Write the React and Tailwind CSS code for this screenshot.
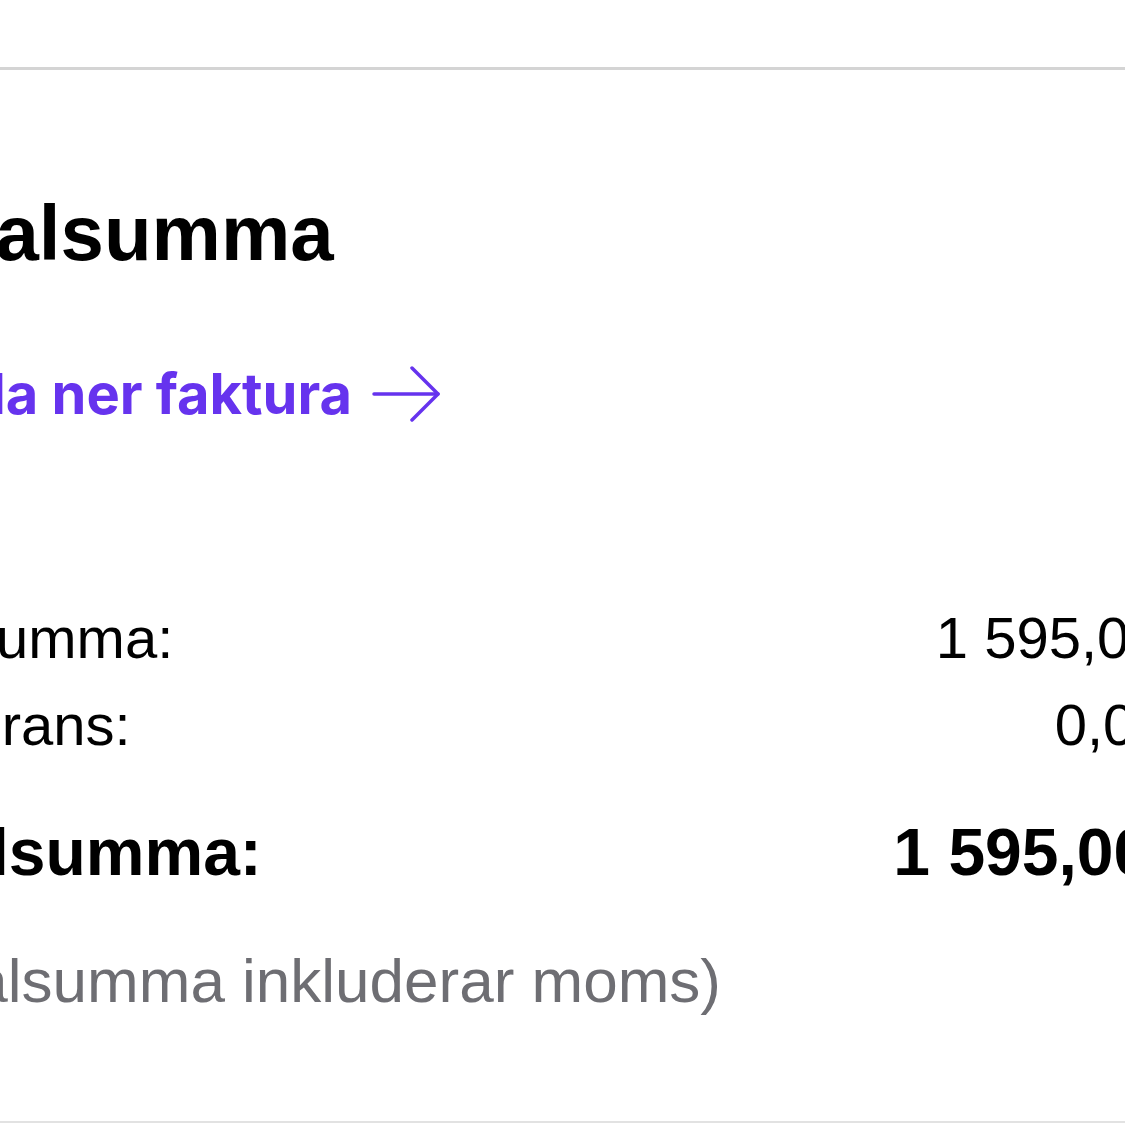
export default function App() {
  return (
    <div className="w-[1125px] h-[1125px] overflow-hidden bg-white" style={{ fontFamily: '"Liberation Sans", Arial, sans-serif' }}>
      <div className="flex flex-col">
        <div className="mt-[67px] h-[3px] w-full bg-[#d4d4d4]" />
        <div className="-ml-[120px] w-[1342px] flex flex-col text-black">
          <h1 className="mt-[124px] text-[78px] leading-none font-bold">Totalsumma</h1>
          <a className="mt-[94px] -ml-[9px] flex items-center gap-[20px] text-[#6633ee]" href="#">
            <span className="text-[56px] leading-none font-bold" style={{ fontFamily: 'Inter, "Liberation Sans", sans-serif' }}>Ladda ner faktura</span>
            <svg width="70" height="56" viewBox="0 0 70 56" fill="none" stroke="#6633ee" strokeWidth="3.5" strokeLinecap="round" strokeLinejoin="round">
              <path d="M2 28H66" />
              <path d="M40 2L66 28L40 54" />
            </svg>
          </a>
          <div className="mt-[187px] flex justify-between text-[58px] leading-none">
            <span className="ml-[0px]">Delsumma:</span>
            <span className="-mr-[4px]">1&nbsp;595,00 kr</span>
          </div>
          <div className="mt-[29px] flex justify-between text-[58px] leading-none">
            <span className="-ml-[4px]">Leverans:</span>
            <span className="-mr-[10px]">0,00 kr</span>
          </div>
          <div className="mt-[65px] flex justify-between text-[66px] leading-none font-bold">
            <span className="-ml-[24px]">Totalsumma:</span>
            <span className="-mr-[9px]">1&nbsp;595,00 kr</span>
          </div>
          <p className="mt-[65px] -ml-[10px] text-[62px] leading-none text-[#6e6e73]">(Totalsumma inkluderar moms)</p>
        </div>
        <div className="mt-[109px] h-[2px] w-full bg-[#e2e2e2]" />
      </div>
    </div>
  );
}
